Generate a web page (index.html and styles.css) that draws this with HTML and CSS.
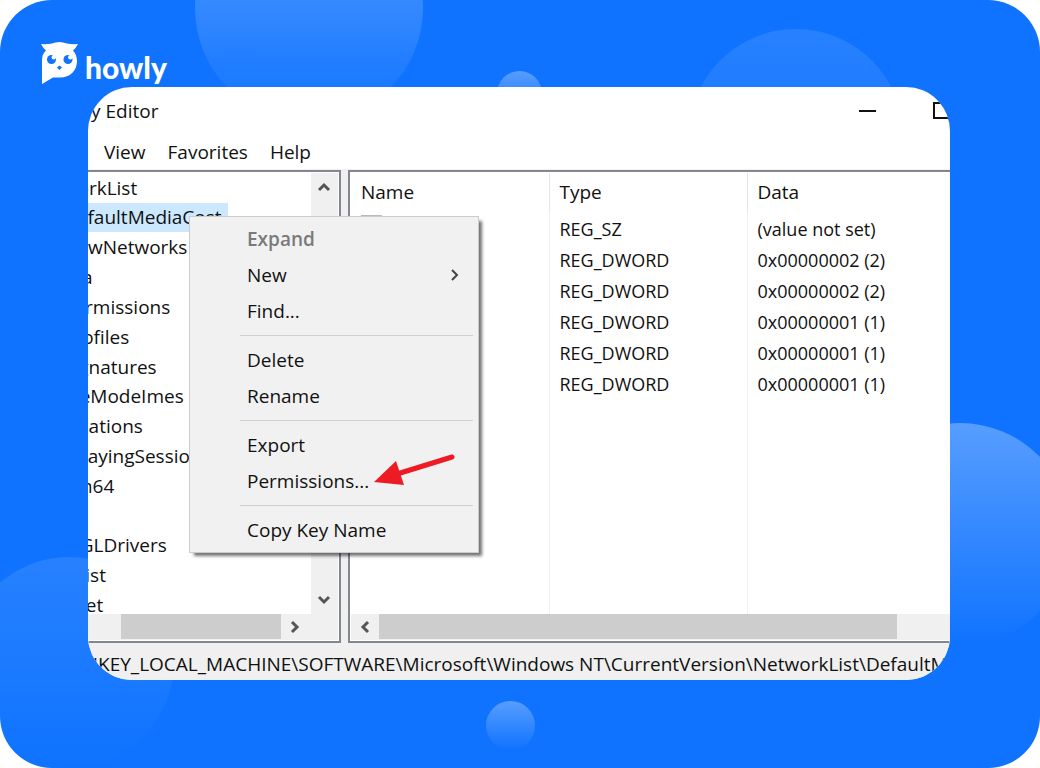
FILE: index.html
```html
<!DOCTYPE html>
<html lang="en">
<head>
<meta charset="utf-8">
<title>Registry Editor</title>
<link rel="stylesheet" href="styles.css">
</head>
<body>
<div class="card">
  <div class="bubbles" aria-hidden="true">
    <span class="bubble bubble-top"></span>
    <span class="bubble bubble-dot"></span>
    <span class="bubble bubble-corner"></span>
    <span class="bubble bubble-right"></span>
    <span class="bubble bubble-left"></span>
    <span class="bubble bubble-bottom"></span>
  </div>
  <header class="brand">
    <svg class="owl" viewBox="0 0 37 42" aria-hidden="true">
      <path fill="#fff" d="M0 2 Q6 2.500 11 1.500 Q18 -1.500 26 1.500 Q31 2.500 37 2 Q35 6 32 8.500 Q36 13 36 19 C36 29 29 35.500 19 35.500 L12 35.500 L1 42 L1 18 Q1 12 5 8.500 Q2 6 0 2 Z"/>
      <circle cx="10.500" cy="17.500" r="4.500" fill="#0f73ff"/>
      <circle cx="27" cy="17.500" r="4.500" fill="#0f73ff"/>
      <circle cx="12.800" cy="15.200" r="2.200" fill="#fff"/>
      <circle cx="29.300" cy="15.200" r="2.200" fill="#fff"/>
      <path fill="#0f73ff" d="M18.500 23.500 L21 25.500 L18.500 28 L16 25.500 Z"/>
    </svg>
    <span class="brand-name">howly</span>
  </header>

  <main class="window">
    <div class="titlebar">
      <h1 class="title">Registry Editor</h1>
      <div class="controls">
        <button class="control" aria-label="Minimize"><svg width="18" height="18" viewBox="0 0 18 18"><path d="M0 9H17" stroke="#111" stroke-width="2"/></svg></button>
        <button class="control" aria-label="Maximize"><svg width="18" height="18" viewBox="0 0 18 18"><path d="M1 1H17V16H1Z" fill="none" stroke="#111" stroke-width="2"/></svg></button>
      </div>
    </div>
    <nav class="menubar">
      <button>View</button>
      <button>Favorites</button>
      <button>Help</button>
    </nav>

    <div class="panes">
      <section class="pane tree-pane">
        <div class="tree-body">
          <ul class="tree">
            <li class="parent"><span>NetworkList</span></li>
            <li><span class="selected">DefaultMediaCost</span></li>
            <li><span>NewNetworks</span></li>
            <li><span>Nla</span></li>
            <li><span>Permissions</span></li>
            <li><span>Profiles</span></li>
            <li><span>Signatures</span></li>
            <li class="parent"><span>NoImeModeImes</span></li>
            <li class="parent"><span>Notifications</span></li>
            <li class="parent"><span>NowPlayingSessionManager</span></li>
            <li class="parent"><span>NtVdm64</span></li>
            <li class="parent"></li>
            <li class="parent"><span>OpenGLDrivers</span></li>
            <li class="parent"><span>PeerDist</span></li>
            <li class="parent"><span>PeerNet</span></li>
          </ul>
          <div class="vscroll">
            <button aria-label="Scroll up"><svg width="14" height="12" viewBox="0 0 14 12"><path d="M2 9L7 4L12 9" fill="none" stroke="#555" stroke-width="3"/></svg></button>
            <button aria-label="Scroll down"><svg width="14" height="12" viewBox="0 0 14 12"><path d="M2 3L7 8L12 3" fill="none" stroke="#555" stroke-width="3"/></svg></button>
          </div>
        </div>
        <div class="hscroll tree-hscroll">
          <span class="thumb"></span>
          <button aria-label="Scroll right"><svg width="12" height="14" viewBox="0 0 12 14"><path d="M3 2L8 7L3 12" fill="none" stroke="#555" stroke-width="3"/></svg></button>
        </div>
      </section>

      <section class="pane list-pane">
        <div class="list-body">
          <table class="values">
            <thead>
              <tr><th>Name</th><th>Type</th><th>Data</th></tr>
            </thead>
            <tbody>
              <tr><td><i class="value-icon"></i></td><td>REG_SZ</td><td>(value not set)</td></tr>
              <tr><td></td><td>REG_DWORD</td><td>0x00000002 (2)</td></tr>
              <tr><td></td><td>REG_DWORD</td><td>0x00000002 (2)</td></tr>
              <tr><td></td><td>REG_DWORD</td><td>0x00000001 (1)</td></tr>
              <tr><td></td><td>REG_DWORD</td><td>0x00000001 (1)</td></tr>
              <tr><td></td><td>REG_DWORD</td><td>0x00000001 (1)</td></tr>
              <tr class="filler"><td></td><td></td><td></td></tr>
            </tbody>
          </table>
        </div>
        <div class="hscroll list-hscroll">
          <button aria-label="Scroll left"><svg width="12" height="14" viewBox="0 0 12 14"><path d="M9 2L4 7L9 12" fill="none" stroke="#555" stroke-width="3"/></svg></button>
          <span class="thumb"></span>
        </div>
      </section>
    </div>

    <footer class="status"><span>HKEY_LOCAL_MACHINE\SOFTWARE\Microsoft\Windows NT\CurrentVersion\NetworkList\DefaultMediaCost</span></footer>

    <div class="context" role="menu">
      <button role="menuitem" class="default" disabled>Expand</button>
      <button role="menuitem">New <svg width="10" height="14" viewBox="0 0 10 14"><path d="M2 2L7 7L2 12" fill="none" stroke="#444" stroke-width="2"/></svg></button>
      <button role="menuitem">Find...</button>
      <hr>
      <button role="menuitem">Delete</button>
      <button role="menuitem">Rename</button>
      <hr>
      <button role="menuitem">Export</button>
      <button role="menuitem">Permissions...</button>
      <hr>
      <button role="menuitem">Copy Key Name</button>
      <svg class="pointer" width="84" height="36" viewBox="0 0 84 36" aria-hidden="true">
        <path d="M24 20L79 3" stroke="#ed1c24" stroke-width="5" stroke-linecap="round"/>
        <path d="M1 28L23 7L31 31Z" fill="#ed1c24"/>
      </svg>
    </div>
  </main>
</div>
</body>
</html>
```
FILE: styles.css
```css
* { box-sizing: border-box; }

body {
  margin: 0;
  background: #fff;
  color: #111;
  font: 19px/24px "Open Sans", "Noto Sans", sans-serif;
}

button {
  padding: 0;
  border: 0;
  background: none;
  color: inherit;
  font: inherit;
}

svg { display: block; }

.card {
  position: relative;
  display: flex;
  flex-direction: column;
  min-height: 100vh;
  padding: 0 90px 88px 88px;
  border-radius: 52px;
  background: #0f73ff;
  overflow: hidden;
}

/* Decorative circles behind the window */
.bubble {
  position: absolute;
  border-radius: 50%;
  background: linear-gradient(rgba(255, 255, 255, .3), rgba(255, 255, 255, 0));
}
.bubble-top { left: 195px; top: -106px; width: 228px; height: 228px; }
.bubble-dot { left: 497px; top: 71px; width: 45px; height: 45px; }
.bubble-corner {
  right: 137px; top: 29px; width: 214px; height: 214px;
  background: linear-gradient(rgba(255, 255, 255, .1), rgba(255, 255, 255, 0));
}
.bubble-right { right: -31px; top: 423px; width: 222px; height: 222px; }
.bubble-left {
  left: -36px; bottom: 1px; width: 210px; height: 210px;
  background: linear-gradient(rgba(255, 255, 255, .1), rgba(255, 255, 255, 0));
}
.bubble-bottom { left: 486px; bottom: 18px; width: 49px; height: 49px; }

.brand {
  position: relative;
  display: flex;
  gap: 7px;
  height: 87px;
  margin-left: -47px;
  padding-top: 42px;
  color: #fff;
}
.owl { width: 37px; height: 42px; }
.brand-name { font: 900 30px/50px Lato, sans-serif; }

.window {
  position: relative;
  display: flex;
  flex: 1;
  flex-direction: column;
  border-radius: 44px;
  background: #fff;
  overflow: hidden;
}

.titlebar {
  display: flex;
  justify-content: space-between;
  height: 48px;
}
.title {
  margin: 0 0 0 -58px;
  font: inherit;
  line-height: 48px;
}
.controls {
  display: flex;
  gap: 56px;
  align-items: center;
  margin-right: -1px;
}

.menubar {
  display: flex;
  gap: 22px;
  height: 34px;
  padding: 0 16px;
}
.menubar button { line-height: 34px; }

.panes {
  display: flex;
  flex: 1;
  gap: 7px;
  border-top: 1px solid #f0f0f0;
  background: #f0f0f0;
}
.pane {
  display: flex;
  flex-direction: column;
  border: 2px solid #828790;
  background: #fff;
  overflow: hidden;
}
.tree-pane {
  width: 253px;
  padding: 1px 1px 1px 0;
  border-left: 0;
}
.tree-body {
  display: flex;
  flex: 1;
  min-height: 0;
}
.tree {
  display: grid;
  flex: 1;
  grid-auto-rows: 1fr;
  min-width: 0;
  margin: 0 0 -6px;
  padding: 0;
  list-style: none;
}
.tree li {
  display: flex;
  align-items: center;
  margin-left: -25px;
  white-space: nowrap;
}
.tree .parent { margin-left: -57px; }
.tree .selected {
  padding: 2px 6px 3px;
  margin-left: -6px;
  background: #cce8ff;
}

.vscroll {
  display: flex;
  flex-direction: column;
  justify-content: space-between;
  width: 27px;
  padding-right: 2px;
  background: #f0f0f0;
}
.vscroll button {
  display: grid;
  place-items: center;
  height: 28px;
}

.hscroll {
  display: flex;
  height: 26px;
  background: #f0f0f0;
}
.hscroll button {
  display: grid;
  place-items: center;
  width: 28px;
}
.hscroll .thumb {
  height: 25px;
  background: #cdcdcd;
}
.tree-hscroll {
  padding: 0 29px 0 33px;
}
.tree-hscroll .thumb { flex: 1; }

.list-pane {
  flex: 1;
  min-width: 0;
  padding: 1px 0 1px 1px;
  border-right: 0;
}
.list-body {
  display: flex;
  flex: 1;
}
.list-hscroll .thumb {
  flex: 1;
  margin-right: 53px;
}

.values {
  width: 100%;
  border-collapse: collapse;
  font-size: 18px;
  table-layout: fixed;
}
.values th, .values td {
  height: 31px;
  padding: 0 10px;
  border-right: 1px solid #e9f1fa;
  font-weight: 400;
  text-align: left;
}
.values th {
  width: 198px;
  height: 40px;
  padding-bottom: 3px;
  border-color: #e5e5e5;
  font-size: 19px;
}
.values th:last-child { width: auto; }
.values th:last-child, .values td:last-child { border-right: 0; }
.values .filler td { height: auto; }
.value-icon {
  display: block;
  width: 21px;
  height: 28px;
  border: 1px solid #bbb;
}

.status {
  height: 37px;
  background: #f0f0f0;
  line-height: 42px;
  white-space: nowrap;
}
.status span { margin-left: -4px; }

/* Context menu opened over the selected key */
.context {
  position: absolute;
  left: 101px;
  top: 129px;
  width: 290px;
  padding: 4px 0;
  border: 1px solid #ccc;
  background: #f1f1f1;
  box-shadow: 4px 4px 3px -1px rgba(0, 0, 0, .55);
}
.context button {
  display: flex;
  align-items: center;
  justify-content: space-between;
  width: 100%;
  height: 36px;
  padding: 0 18px 0 57px;
}
.context .default {
  color: #7a7a7a;
  font-weight: 600;
}
.context hr {
  height: 1px;
  margin: 6px 5px 6px 50px;
  border: 0;
  background: #d0d0d0;
}
.pointer {
  position: absolute;
  left: 183px;
  top: 237px;
}
```
